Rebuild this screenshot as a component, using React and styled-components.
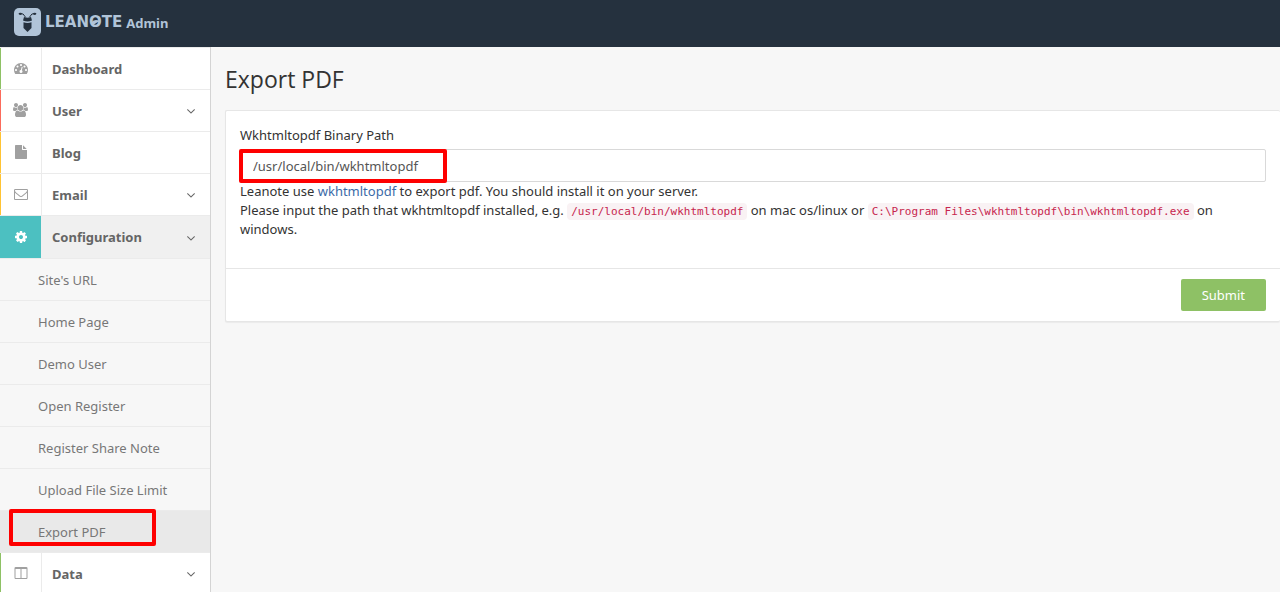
import React from "react";
import styled, { createGlobalStyle } from "styled-components";

const GlobalStyle = createGlobalStyle`
  * {
    box-sizing: border-box;
  }
  html,
  body,
  #root {
    height: 100%;
  }
  body {
    margin: 0;
    background-color: #f7f7f7;
    color: #333;
    font-family: "Noto Sans", "Open Sans", sans-serif;
    font-size: 13px;
    line-height: 19px;
  }
`;

const Page = styled.div`
  min-height: 100%;
  height: 100%;
  display: flex;
  flex-direction: column;
  overflow: hidden;
`;
const Header = styled.header`
  height: 47px;
  flex: none;
  padding: 0 14px 3px;
  display: flex;
  align-items: center;
  background-color: #25313e;
`;
const Brand = styled.a`
  display: flex;
  align-items: center;
  gap: 4px;
  color: #b1c4d8;
  text-decoration: none;
  font-weight: 700;
`;
const LogoMark = styled.svg`
  width: 27px;
  height: 28px;
  display: block;
`;
const Wordmark = styled.span`
  font-family: "DejaVu Sans", sans-serif;
  font-size: 15px;
  font-weight: 700;
`;
const LeafO = styled.span`
  position: relative;
`;
const Leaf = styled.svg`
  position: absolute;
  left: 2px;
  top: 5px;
  width: 9px;
  height: 8px;
`;
const BrandText = styled.span`
  padding-top: 2px;
`;
const Body = styled.div`
  flex: 1;
  min-height: 0;
  display: flex;
`;
const Sidebar = styled.nav`
  width: 211px;
  flex: none;
  border-right: 1px solid #d4d4d4;
  background-color: #fff;
`;
const List = styled.ul`
  list-style: none;
  margin: 0;
  padding: 0;
`;
const NavLink = styled.a`
  height: ${(props) => (props.$open ? "43px" : "42px")};
  display: flex;
  align-items: stretch;
  border-top: 1px solid #ebebeb;
  background-color: ${(props) => (props.$open ? "#f0f0f0" : "#fff")};
  color: #656565;
  font-weight: 700;
  text-decoration: none;
`;
const IconCell = styled.span`
  width: ${(props) => (props.$open ? "41px" : "42px")};
  display: flex;
  align-items: center;
  justify-content: center;
  padding: 0 1px 1px 0;
  border-left: 1px solid ${(props) => props.$color};
  border-right: ${(props) => (props.$open ? "none" : "1px solid #ebebeb")};
  background-color: ${(props) => (props.$open ? props.$color : "transparent")};
  color: ${(props) => (props.$open ? "#fff" : "#a0a0a0")};
`;
const NavText = styled.span`
  flex: 1;
  display: flex;
  align-items: center;
  justify-content: space-between;
  padding: 1px 12px 0 ${(props) => (props.$open ? "11px" : "10px")};
`;
const SubItem = styled.li`
  position: relative;
`;
const SubLink = styled.a`
  height: 42px;
  display: flex;
  align-items: center;
  padding: 1px 0 0 38px;
  border-top: 1px solid #ebebeb;
  background-color: ${(props) => (props.$active ? "#e9e9e9" : "#f7f7f7")};
  color: #777;
  text-decoration: none;
`;
const Icon = styled.svg`
  height: 14px;
  display: block;
  fill: currentColor;
`;
const Main = styled.main`
  flex: 1;
  min-width: 0;
  padding: 16px 0 0 14px;
`;
const Title = styled.h3`
  margin: 0 0 15px;
  font-family: "Open Sans", sans-serif;
  font-size: 23px;
  font-weight: 400;
  line-height: 32px;
`;
const Card = styled.form`
  background-color: #fff;
  border: 1px solid #e6e6e6;
  border-right: none;
  border-radius: 2px;
  box-shadow: 0 1px 1px rgba(0, 0, 0, 0.05);
`;
const CardBody = styled.div`
  padding: 15px 14px 29px;
`;
const Label = styled.label`
  display: block;
  margin-bottom: 4px;
`;
const Field = styled.div`
  position: relative;
`;
const Input = styled.input`
  display: block;
  width: 100%;
  height: 33px;
  padding: 0 12px;
  border: 1px solid #d9d9d9;
  border-radius: 2px;
  background-color: #fff;
  color: #555;
  font: inherit;
`;
const Help = styled.div`
  a {
    color: #3c6ba8;
    text-decoration: none;
  }
`;
const Code = styled.code`
  padding: 2px 4px;
  border-radius: 4px;
  background-color: #f9f2f4;
  color: #c7254e;
  font-family: "DejaVu Sans Mono", "Liberation Mono", monospace;
  font-size: 11px;
  line-height: 1;
`;
const CardFooter = styled.div`
  display: flex;
  justify-content: flex-end;
  padding: 10px 14px;
  border-top: 1px solid #e6e6e6;
`;
const Button = styled.button`
  height: 32px;
  padding: 0 21px;
  border: none;
  border-radius: 2px;
  background-color: #8ec165;
  color: #fff;
  font: inherit;
`;
const Highlight = styled.span`
  position: absolute;
  top: ${(props) => props.$top};
  left: ${(props) => props.$left};
  width: ${(props) => props.$width};
  height: ${(props) => props.$height};
  border: 4px solid #fe0000;
  border-radius: 2px;
  pointer-events: none;
`;

const icons = {
  dashboard: {
    box: "0 0 1792 1792",
    d: "M384 1152q0-53-37.5-90.5t-90.5-37.5-90.5 37.5-37.5 90.5 37.5 90.5 90.5 37.5 90.5-37.5 37.5-90.5zm192-448q0-53-37.5-90.5t-90.5-37.5-90.5 37.5-37.5 90.5 37.5 90.5 90.5 37.5 90.5-37.5 37.5-90.5zm428 481l101-382q6-26-7.5-48.5t-38.5-29.5-48 6.5-30 39.5l-101 382q-60 5-107 43.5t-63 98.5q-20 77 20 146t117 89 146-20 89-117q16-60-6-117t-72-91zm660-33q0-53-37.5-90.5t-90.5-37.5-90.5 37.5-37.5 90.5 37.5 90.5 90.5 37.5 90.5-37.5 37.5-90.5zm-640-640q0-53-37.5-90.5t-90.5-37.5-90.5 37.5-37.5 90.5 37.5 90.5 90.5 37.5 90.5-37.5 37.5-90.5zm448 192q0-53-37.5-90.5t-90.5-37.5-90.5 37.5-37.5 90.5 37.5 90.5 90.5 37.5 90.5-37.5 37.5-90.5zm320 448q0 261-141 483-19 29-54 29h-1402q-35 0-54-29-141-221-141-483 0-182 71-348t191-286 286-191 348-71 348 71 286 191 191 286 71 348z",
  },
  group: {
    box: "0 0 1920 1792",
    d: "M593 896q-162 5-265 128h-134q-82 0-138-40.5t-56-118.5q0-353 124-353 6 0 43.5 21t97.5 42.5 119 21.5q67 0 133-23-5 37-5 66 0 139 81 256zm1071 637q0 120-73 189.5t-194 69.5h-874q-121 0-194-69.5t-73-189.5q0-53 3.5-103.5t14-109 26.5-108.5 43-97.5 62-81 85.5-53.5 111.5-20q10 0 43 21.5t73 48 107 48 135 21.5 135-21.5 107-48 73-48 43-21.5q61 0 111.5 20t85.5 53.5 62 81 43 97.5 26.5 108.5 14 109 3.5 103.5zm-1024-1277q0 106-75 181t-181 75-181-75-75-181 75-181 181-75 181 75 75 181zm704 384q0 159-112.5 271.5t-271.5 112.5-271.5-112.5-112.5-271.5 112.5-271.5 271.5-112.5 271.5 112.5 112.5 271.5zm576 225q0 78-56 118.5t-138 40.5h-134q-103-123-265-128 81-117 81-256 0-29-5-66 66 23 133 23 59 0 119-21.5t97.5-42.5 43.5-21q124 0 124 353zm-128-609q0 106-75 181t-181 75-181-75-75-181 75-181 181-75 181 75 75 181z",
  },
  file: {
    box: "0 0 1792 1792",
    d: "M1152 512v-472q22 14 36 28l408 408q14 14 28 36h-472zm-128 32q0 40 28 68t68 28h544v1056q0 40-28 68t-68 28h-1344q-40 0-68-28t-28-68v-1600q0-40 28-68t68-28h800v544z",
  },
  envelope: {
    box: "0 0 1792 1792",
    d: "M1664 1504v-768q-32 36-69 66-268 206-426 338-51 43-83 67t-86.5 48.5-102.5 24.5h-2q-48 0-102.5-24.5t-86.5-48.5-83-67q-158-132-426-338-37-30-69-66v768q0 13 9.5 22.5t22.5 9.5h1472q13 0 22.5-9.5t9.5-22.5zm0-1051v-24.5l-.5-13-3-12.5-5.5-9-9-7.5-14-2.5h-1472q-13 0-22.5 9.5t-9.5 22.5q0 168 147 284 193 152 401 317 6 5 35 29.5t46 37.5 44.5 31.5 50.5 27.5 43 9h2q20 0 43-9t50.5-27.5 44.5-31.5 46-37.5 35-29.5q208-165 401-317 54-43 100.5-115.5t46.5-131.5zm128-37v1088q0 66-47 113t-113 47h-1472q-66 0-113-47t-47-113v-1088q0-66 47-113t113-47h1472q66 0 113 47t47 113z",
  },
  cog: {
    box: "0 0 1792 1792",
    d: "M1152 896q0-106-75-181t-181-75-181 75-75 181 75 181 181 75 181-75 75-181zm512-109v222q0 12-8 23t-20 13l-185 28q-19 54-39 91 35 50 107 138 10 12 10 25t-9 23q-27 37-99 108t-94 71q-12 0-26-9l-138-108q-44 23-91 38-16 136-29 186-7 28-36 28h-222q-14 0-24.5-8.5t-11.5-21.5l-28-184q-49-16-90-37l-141 107q-10 9-25 9-14 0-25-11-126-114-165-168-7-10-7-23 0-12 8-23 15-21 51-66.5t54-70.5q-27-50-41-99l-183-27q-13-2-21-12.5t-8-23.5v-222q0-12 8-23t19-13l186-28q14-46 39-92-40-57-107-138-10-12-10-24 0-10 9-23 26-36 98.5-107.5t94.5-71.5q13 0 26 10l138 107q44-23 91-38 16-136 29-186 7-28 36-28h222q14 0 24.5 8.5t11.5 21.5l28 184q49 16 90 37l142-107q9-9 24-9 13 0 25 10 129 119 165 170 7 8 7 22 0 12-8 23-15 21-51 66.5t-54 70.5q26 50 41 98l183 28q13 2 21 12.5t8 23.5z",
  },
  columns: {
    box: "0 0 1792 1792",
    d: "M224 1536h608v-1152h-640v1120q0 13 9.5 22.5t22.5 9.5zm1376-32v-1120h-640v1152h608q13 0 22.5-9.5t9.5-22.5zm128-1216v1216q0 66-47 113t-113 47h-1344q-66 0-113-47t-47-113v-1216q0-66 47-113t113-47h1344q66 0 113 47t47 113z",
  },
  angleDown: {
    box: "0 0 1792 1792",
    d: "M1395 736q0 13-10 23l-466 466q-10 10-23 10t-23-10l-466-466q-10-10-10-23t10-23l50-50q10-10 23-10t23 10l393 393 393-393q10-10 23-10t23 10l50 50q10 10 10 23z",
  },
};

const menu = [
  { text: "Dashboard", icon: "dashboard", color: "#8ec165" },
  { text: "User", icon: "group", color: "#fb6b5b", more: true },
  { text: "Blog", icon: "file", color: "#ffc333" },
  { text: "Email", icon: "envelope", color: "#ffc333", more: true },
  {
    text: "Configuration",
    icon: "cog",
    color: "#4cc0c1",
    more: true,
    children: [
      "Site's URL",
      "Home Page",
      "Demo User",
      "Open Register",
      "Register Share Note",
      "Upload File Size Limit",
      "Export PDF",
    ],
  },
  { text: "Data", icon: "columns", color: "#8ec165", more: true },
];

function Glyph({ name }) {
  return (
    <Icon viewBox={icons[name].box} aria-hidden="true">
      <path d={icons[name].d} />
    </Icon>
  );
}

function Logo() {
  return (
    <LogoMark viewBox="0 0 27 28" aria-hidden="true">
      <rect width="27" height="28" rx="5" fill="#b1c4d8" />
      <g fill="none" stroke="#25313e" strokeLinecap="round">
        <path d="M6 5.500Q9.500 4.500 11.500 9" />
        <path d="M21 5.500Q17.500 4.500 15.500 9" />
      </g>
      <g fill="#25313e">
        <ellipse cx="6.300" cy="5.800" rx="1.700" ry="1.100" />
        <ellipse cx="20.700" cy="5.800" rx="1.700" ry="1.100" />
        <path d="M10 9Q13.500 10.500 17 9L18 12.500Q13.500 14.500 9 12.500Z" />
        <path d="M9.500 14.200Q13.500 15.700 17.500 14.200V20L13.500 24L9.500 20Z" />
      </g>
    </LogoMark>
  );
}

function MenuItem({ item }) {
  const open = Boolean(item.children);
  return (
    <li>
      <NavLink href="#" $open={open}>
        <IconCell $open={open} $color={item.color}>
          <Glyph name={item.icon} />
        </IconCell>
        <NavText $open={open}>
          {item.text}
          {item.more && <Glyph name="angleDown" />}
        </NavText>
      </NavLink>
      {open && (
        <List>
          {item.children.map((child) => (
            <SubItem key={child}>
              <SubLink href="#" $active={child === "Export PDF"}>
                {child}
              </SubLink>
              {child === "Export PDF" && (
                <Highlight $top="-1px" $left="9px" $width="147px" $height="37px" />
              )}
            </SubItem>
          ))}
        </List>
      )}
    </li>
  );
}

function App() {
  return (
    <Page>
      <GlobalStyle />
      <Header>
        <Brand href="#">
          <Logo />
          <Wordmark>
            LEAN
            <LeafO>
              O
              <Leaf viewBox="0 0 9 8" aria-hidden="true">
                <path d="M0 5Q3 0 9 3L6 4.500Q4 6 1 7Z" fill="#b1c4d8" />
              </Leaf>
            </LeafO>
            TE
          </Wordmark>
          <BrandText>Admin</BrandText>
        </Brand>
      </Header>
      <Body>
        <Sidebar>
          <List>
            {menu.map((item) => (
              <MenuItem key={item.text} item={item} />
            ))}
          </List>
        </Sidebar>
        <Main>
          <Title>Export PDF</Title>
          <Card onSubmit={(e) => e.preventDefault()}>
            <CardBody>
              <Label htmlFor="path">Wkhtmltopdf Binary Path</Label>
              <Field>
                <Input id="path" type="text" defaultValue="/usr/local/bin/wkhtmltopdf" />
                <Highlight $top="0" $left="-1px" $width="208px" $height="34px" />
              </Field>
              <Help>
                Leanote use <a href="#">wkhtmltopdf</a> to export pdf. You should
                install it on your server.
                <br />
                Please input the path that wkhtmltopdf installed, e.g.{" "}
                <Code>/usr/local/bin/wkhtmltopdf</Code> on mac os/linux or{" "}
                <Code>C:\Program Files\wkhtmltopdf\bin\wkhtmltopdf.exe</Code> on
                windows.
              </Help>
            </CardBody>
            <CardFooter>
              <Button type="submit">Submit</Button>
            </CardFooter>
          </Card>
        </Main>
      </Body>
    </Page>
  );
}

export default App;
